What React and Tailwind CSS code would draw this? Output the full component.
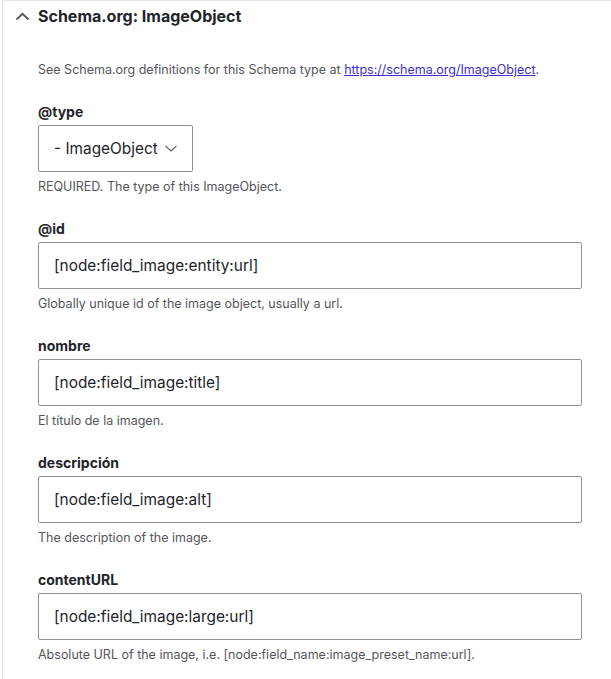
import React from "react";

const font = { fontFamily: 'Inter, "Noto Sans", sans-serif' };

function Field({ label, value, help }) {
  return (
    <div className="mt-[24px]">
      <div className="text-[14px] leading-[20px] font-bold text-[#232429]">{label}</div>
      <div className="mt-[3px] h-[47px] border border-[#8e929c] rounded-[2px] flex items-center pl-[15px] text-[15.4px] text-[#232429] w-full">
        {value}
      </div>
      <div className="mt-[7px] text-[12.5px] leading-[16px] text-[#55565b]">{help}</div>
    </div>
  );
}

export default function App() {
  return (
    <div className="min-h-screen bg-white pl-[2px]" style={font}>
      <div className="border-l border-t border-[#e6e6e6] min-h-[679px] pr-[29px]">
        <div className="h-[30px] flex items-center pl-[12px]">
          <svg width="15" height="9" viewBox="0 0 15 9" className="text-[#55565b]">
            <path d="M1.5 7.5 L7.5 1.8 L13.5 7.5" fill="none" stroke="currentColor" strokeWidth="1.8" />
          </svg>
          <span className="ml-[8px] text-[16px] font-bold text-[#232429]">Schema.org: ImageObject</span>
        </div>
        <div className="pl-[35px]">
          <div className="mt-[30px] text-[12.5px] leading-[18px] text-[#55565b]">
            See Schema.org definitions for this Schema type at{" "}
            <a href="#" className="text-[#3b30d0] underline">https://schema.org/ImageObject</a>.
          </div>

          <div className="mt-[23px]">
            <div className="text-[14px] leading-[20px] font-bold text-[#232429]">@type</div>
            <div className="mt-[3px] h-[47px] w-[155px] border border-[#8e929c] rounded-[2px] flex items-center pl-[15px] text-[15.4px] text-[#232429]">
              <span>- ImageObject</span>
              <svg width="12" height="7" viewBox="0 0 12 7" className="ml-[7px] text-[#55565b]">
                <path d="M0.5 0.8 L6 6 L11.5 0.8" fill="none" stroke="currentColor" strokeWidth="1.1" />
              </svg>
            </div>
            <div className="mt-[7px] text-[12.5px] leading-[16px] text-[#55565b]">REQUIRED. The type of this ImageObject.</div>
          </div>

          <Field label="@id" value="[node:field_image:entity:url]" help="Globally unique id of the image object, usually a url." />
          <Field label="nombre" value="[node:field_image:title]" help="El título de la imagen." />
          <Field label="descripción" value="[node:field_image:alt]" help="The description of the image." />
          <Field label="contentURL" value="[node:field_image:large:url]" help="Absolute URL of the image, i.e. [node:field_name:image_preset_name:url]." />
        </div>
      </div>
    </div>
  );
}
